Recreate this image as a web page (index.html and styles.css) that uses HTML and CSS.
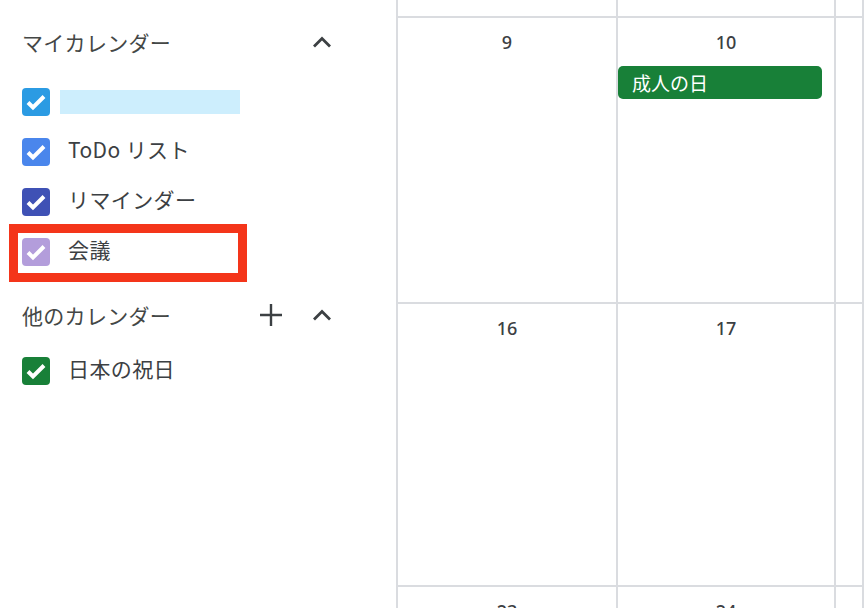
FILE: index.html
```html
<!DOCTYPE html>
<html lang="ja">
<head>
    <meta charset="UTF-8">
    <meta name="viewport" content="width=device-width, initial-scale=1.0">
    <title>カレンダー</title>
    <link rel="stylesheet" href="styles.css">
</head>
<body>
    <div class="app">
        <aside class="sidebar">
            <div class="section-head">
                <span class="section-title">マイカレンダー</span>
                <div class="head-icons">
                    <span class="icon">
                        <svg width="24" height="24" viewBox="0 0 24 24"><path d="M4 16.5l8-8 8 8" fill="none" stroke="#3c4043" stroke-width="2.8"/></svg>
                    </span>
                </div>
            </div>
            <ul class="cal-list">
                <li class="cal-item">
                    <span class="check peacock">
                        <svg width="28" height="28" viewBox="0 0 28 28"><path d="M6 14.5l5 5 11-11" fill="none" stroke="#fff" stroke-width="4"/></svg>
                    </span>
                    <span class="hidden-name"></span>
                </li>
                <li class="cal-item">
                    <span class="check blue">
                        <svg width="28" height="28" viewBox="0 0 28 28"><path d="M6 14.5l5 5 11-11" fill="none" stroke="#fff" stroke-width="4"/></svg>
                    </span>
                    <span class="cal-name">ToDo リスト</span>
                </li>
                <li class="cal-item">
                    <span class="check indigo">
                        <svg width="28" height="28" viewBox="0 0 28 28"><path d="M6 14.5l5 5 11-11" fill="none" stroke="#fff" stroke-width="4"/></svg>
                    </span>
                    <span class="cal-name">リマインダー</span>
                </li>
                <li class="cal-item marked">
                    <span class="check lavender">
                        <svg width="28" height="28" viewBox="0 0 28 28"><path d="M6 14.5l5 5 11-11" fill="none" stroke="#fff" stroke-width="4"/></svg>
                    </span>
                    <span class="cal-name">会議</span>
                    <span class="highlight"></span>
                </li>
            </ul>

            <div class="section-head other">
                <span class="section-title">他のカレンダー</span>
                <div class="head-icons">
                    <span class="icon">
                        <svg width="24" height="24" viewBox="0 0 24 24"><path d="M12 1v22M1 12h22" fill="none" stroke="#3c4043" stroke-width="2.4"/></svg>
                    </span>
                    <span class="icon">
                        <svg width="24" height="24" viewBox="0 0 24 24"><path d="M4 16.5l8-8 8 8" fill="none" stroke="#3c4043" stroke-width="2.8"/></svg>
                    </span>
                </div>
            </div>
            <ul class="cal-list holidays">
                <li class="cal-item">
                    <span class="check basil">
                        <svg width="28" height="28" viewBox="0 0 28 28"><path d="M6 14.5l5 5 11-11" fill="none" stroke="#fff" stroke-width="4"/></svg>
                    </span>
                    <span class="cal-name">日本の祝日</span>
                </li>
            </ul>
        </aside>

        <main class="month">
            <div class="cell"></div>
            <div class="cell"></div>
            <div class="cell"></div>

            <div class="cell"><div class="day">9</div></div>
            <div class="cell">
                <div class="day">10</div>
                <div class="event">成人の日</div>
            </div>
            <div class="cell"></div>

            <div class="cell"><div class="day">16</div></div>
            <div class="cell"><div class="day">17</div></div>
            <div class="cell"></div>

            <div class="cell"><div class="day">23</div></div>
            <div class="cell"><div class="day">24</div></div>
            <div class="cell"></div>
        </main>
    </div>
</body>
</html>
```

FILE: styles.css
```css
body {
    margin: 0;
    padding: 0;
    background-color: #fff;
    color: #3c4043;
    font-family: "Noto Sans CJK JP", "Noto Sans", Roboto, sans-serif;
}
.app {
    display: flex;
    width: 864px;
    height: 608px;
    overflow: hidden;
}
.sidebar {
    width: 374px;
    flex-shrink: 0;
    padding: 21px 0 0 22px;
}
.section-head {
    display: flex;
    align-items: center;
    justify-content: space-between;
    height: 42px;
    padding-right: 62px;
}
.section-head.other {
    margin-top: 17px;
}
.section-title {
    font-size: 21px;
    letter-spacing: 0.3px;
    color: #444746;
}
.head-icons {
    display: flex;
    gap: 27px;
}
.icon {
    display: flex;
    width: 24px;
    height: 24px;
}
.cal-list {
    list-style: none;
    margin: 14px 0 0;
    padding: 0;
}
.cal-list.holidays {
    margin-top: 10px;
}
.cal-item {
    position: relative;
    display: flex;
    align-items: center;
    height: 50px;
}
.check {
    display: flex;
    width: 28px;
    height: 28px;
    border-radius: 4px;
    flex-shrink: 0;
}
.peacock { background-color: #2b9be3; }
.blue { background-color: #4a86ec; }
.indigo { background-color: #3f51b5; }
.lavender { background-color: #b39ddb; }
.basil { background-color: #188038; }
.cal-name {
    margin-left: 18px;
    padding-bottom: 7px;
    font-size: 21px;
    letter-spacing: 0.4px;
}
.hidden-name {
    width: 180px;
    height: 24px;
    margin-left: 10px;
    background-color: #cdeefd;
}
.highlight {
    position: absolute;
    left: -13px;
    top: -3px;
    width: 220px;
    height: 40px;
    border: 9px solid #f4351a;
}
.month {
    flex: 1;
    display: grid;
    grid-template-columns: 220px 218px 1fr;
    grid-template-rows: 18px 286px 283px 1fr;
    border-left: 2px solid #dadce0;
}
.cell {
    border-right: 2px solid #dadce0;
    border-bottom: 2px solid #dadce0;
    min-width: 0;
}
.day {
    padding-top: 12px;
    line-height: 24px;
    text-align: center;
    font-family: "Noto Sans", Roboto, sans-serif;
    font-size: 18px;
    font-weight: 500;
    color: #3c4043;
}
.event {
    width: 190px;
    height: 33px;
    margin-top: 12px;
    padding-left: 14px;
    border-radius: 5px;
    background-color: #188038;
    color: #fff;
    font-size: 19px;
    line-height: 33px;
}
```
